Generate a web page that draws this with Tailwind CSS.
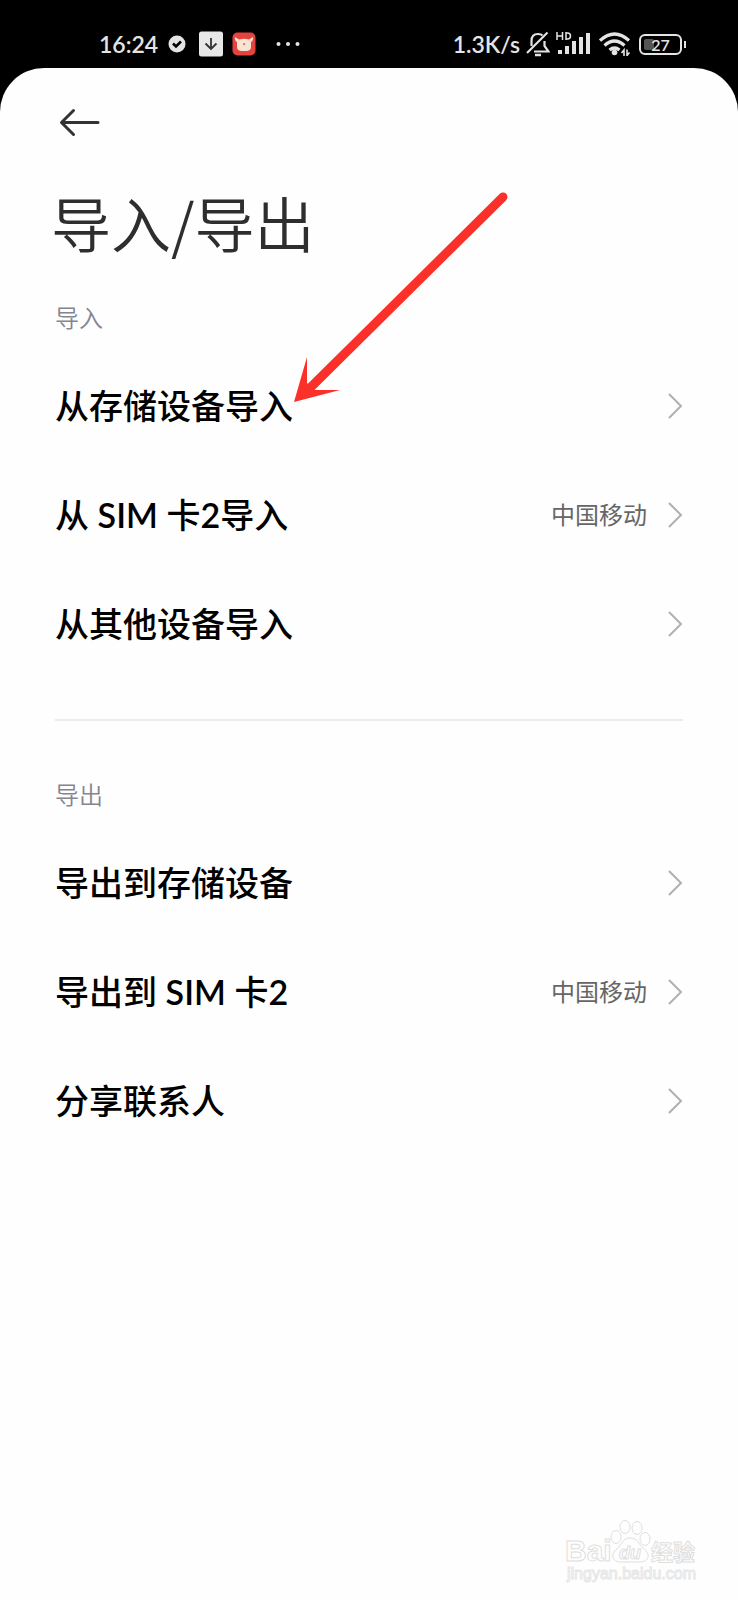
<!DOCTYPE html>
<html lang="zh-CN">
<head>
  <meta charset="UTF-8" />
  <meta name="viewport" content="width=device-width, initial-scale=1" />
  <title>导入/导出</title>
  <script src="https://cdn.jsdelivr.net/npm/@tailwindcss/browser@4"></script>
</head>
<body class="bg-black font-[Lato,'Noto_Sans_CJK_SC',sans-serif]">
  <div class="min-h-screen flex flex-col">

    <!-- status bar -->
    <header class="h-[68px] pt-5 pl-[99px] pr-[52px] flex justify-between text-[23px] leading-[48px] text-[#e4e4e4]">
      <div class="flex items-center h-12">
        <span class="font-semibold">16:24</span>
        <svg class="ml-2.5 size-[18px]" viewBox="0 0 18 18">
          <circle cx="9" cy="9" r="8.5" fill="#e4e4e4" />
          <path d="M5 8.500l3 3 5-5" fill="none" stroke="#000" stroke-width="2.5" />
        </svg>
        <svg class="ml-3 size-[26px]" viewBox="0 0 26 26">
          <rect x="1" y="0.5" width="24" height="25" rx="2.5" fill="#e8e8e8" />
          <path d="M13 7v11M7.500 12.500L13 18l5.500-5.500" fill="none" stroke="#333" stroke-width="1.8" />
        </svg>
        <svg class="ml-2 size-6" viewBox="0 0 24 24">
          <rect x="0.5" y="0.5" width="23" height="23" rx="5" fill="#e5433d" />
          <path d="M3 5l4 2.500q5-1.500 10 0L21 5q.5 3.500-2 5v5q0 3.500-4 4H9q-4-.5-4-4v-5Q2.500 8.500 3 5z" fill="#fbe3d4" />
          <path d="M11 11.500h2.500L12 13.500z" fill="#8a4a3c" />
        </svg>
        <svg class="ml-5 w-6 h-6" viewBox="0 0 24 24" fill="#e4e4e4">
          <circle cx="2.5" cy="12" r="2" /><circle cx="12" cy="12" r="2" /><circle cx="21.5" cy="12" r="2" />
        </svg>
      </div>
      <div class="flex items-center h-12">
        <span class="font-semibold">1.3K/s</span>
        <svg class="ml-1.5 w-6 h-[26px]" viewBox="0 0 24 26" fill="none" stroke="#e4e4e4" stroke-width="2.2">
          <path d="M5.500 15v-5q0-7 6.500-7 3 0 4.500 1.500M18.500 10v5l4 5.500H8" />
          <path d="M1 22L21.500 1.500" />
          <path d="M9 24h6" stroke-width="2.5" />
        </svg>
        <!-- signal with HD mark -->
        <svg class="ml-1.5 w-[35px] h-6" viewBox="0 0 35 24" fill="#e4e4e4">
          <path d="M1 0v8M6.500 0v8M1 4h5.500M10 0v8M10 1h1.500q3 0 3 3t-3 3H10" fill="none" stroke="#e4e4e4" stroke-width="1.5" />
          <rect x="2" y="18" width="4" height="4" /><rect x="9" y="14" width="4" height="8" />
          <rect x="16" y="9" width="4" height="13" /><rect x="23" y="5" width="4" height="17" />
          <rect x="30" y="1" width="4" height="21" />
        </svg>
        <svg class="ml-2 w-8 h-6" viewBox="0 0 32 24" fill="none" stroke="#e4e4e4" stroke-width="3.2">
          <path d="M1 8.500q14.500-13 29 0M5.500 13.500q10-9 20 0M10.500 18q5-4 10 0" />
          <circle cx="15.5" cy="20.5" r="2.8" fill="#e4e4e4" stroke="none" />
          <path d="M25 24v-6l-2.500 3M28 17.500v6l2.500-3" stroke-width="1.6" />
        </svg>
        <div class="ml-2 flex items-center gap-0.5">
          <div class="relative w-[43px] h-[21px] rounded-md border-2 border-[#e4e4e4] text-center text-[16px] leading-[17px] font-semibold">
            <div class="absolute left-[3px] top-[3px] bottom-[3px] w-2.5 rounded-xs bg-[#555]"></div>
            <span class="relative">27</span>
          </div>
          <div class="w-0.5 h-[7px] bg-[#e4e4e4]"></div>
        </div>
      </div>
    </header>

    <main class="relative flex-1 bg-[#fefefe] rounded-t-[44px] pt-[34px] px-[55px]">
      <button class="block ml-1 h-10 w-11" aria-label="返回">
        <svg class="w-11 h-10" viewBox="0 0 44 40" fill="none" stroke="#333" stroke-width="3" stroke-linecap="round" stroke-linejoin="round">
          <path d="M39 20.500H2.500M14.500 8.500l-12 12 12 12" />
        </svg>
      </button>
      <h1 class="mt-10 -ml-1 text-[60px] leading-[80px] font-[350] text-[#2e2e2e] font-['Noto_Sans_CJK_SC',sans-serif]">导入/导出</h1>

      <section class="mt-[38px]">
        <h2 class="mb-[15px] text-[24px] leading-9 font-[350] text-[#85858f]">导入</h2>
        <a href="#" class="h-[109px] flex items-center text-[34px] font-medium text-black">
          <span class="flex-1">从存储设备导入</span>
          <svg class="w-4 h-7" viewBox="0 0 16 28" fill="none" stroke="#b0b0b0" stroke-width="2"><path d="M2 2l12 12L2 26" /></svg>
        </a>
        <a href="#" class="h-[109px] flex items-center text-[34px] font-medium text-black">
          <span class="flex-1">从 <span class="font-semibold">SIM</span> 卡<span class="font-semibold">2</span>导入</span>
          <span class="mr-5 text-[24px] font-normal text-[#666]">中国移动</span>
          <svg class="w-4 h-7" viewBox="0 0 16 28" fill="none" stroke="#b0b0b0" stroke-width="2"><path d="M2 2l12 12L2 26" /></svg>
        </a>
        <a href="#" class="h-[109px] flex items-center text-[34px] font-medium text-black">
          <span class="flex-1">从其他设备导入</span>
          <svg class="w-4 h-7" viewBox="0 0 16 28" fill="none" stroke="#b0b0b0" stroke-width="2"><path d="M2 2l12 12L2 26" /></svg>
        </a>
      </section>

      <hr class="mt-[41px] border-t-2 border-[#ebebeb]" />

      <section class="mt-14">
        <h2 class="mb-[15px] text-[24px] leading-9 font-[350] text-[#85858f]">导出</h2>
        <a href="#" class="h-[109px] flex items-center text-[34px] font-medium text-black">
          <span class="flex-1">导出到存储设备</span>
          <svg class="w-4 h-7" viewBox="0 0 16 28" fill="none" stroke="#b0b0b0" stroke-width="2"><path d="M2 2l12 12L2 26" /></svg>
        </a>
        <a href="#" class="h-[109px] flex items-center text-[34px] font-medium text-black">
          <span class="flex-1">导出到 <span class="font-semibold">SIM</span> 卡<span class="font-semibold">2</span></span>
          <span class="mr-5 text-[24px] font-normal text-[#666]">中国移动</span>
          <svg class="w-4 h-7" viewBox="0 0 16 28" fill="none" stroke="#b0b0b0" stroke-width="2"><path d="M2 2l12 12L2 26" /></svg>
        </a>
        <a href="#" class="h-[109px] flex items-center text-[34px] font-medium text-black">
          <span class="flex-1">分享联系人</span>
          <svg class="w-4 h-7" viewBox="0 0 16 28" fill="none" stroke="#b0b0b0" stroke-width="2"><path d="M2 2l12 12L2 26" /></svg>
        </a>
      </section>

      <!-- pointer to the first row -->
      <svg class="absolute left-[290px] top-[120px] w-[224px] h-[220px] pointer-events-none" viewBox="0 0 224 220">
        <path d="M213 9L21 199" stroke="#fb3028" stroke-width="9" stroke-linecap="round" />
        <path d="M4 214L17 169V195L25 202L50 202z" fill="#fb3028" />
      </svg>

      <!-- watermark -->
      <svg class="absolute right-[36px] bottom-[8px] w-[138px] h-[76px]" viewBox="0 0 138 76" fill="#fefefe" stroke="#dedede" stroke-width="1">
        <text x="1" y="45" font-family="Liberation Sans" font-weight="700" font-size="30">Bai</text>
        <path d="M66 22c8 0 9 7 14 11 7 5 5 13-4 13H57c-9 0-11-8-4-13 5-4 5-11 13-11z" />
        <ellipse cx="52" cy="21" rx="5" ry="6.5" /><ellipse cx="61" cy="11" rx="5" ry="6.5" />
        <ellipse cx="73" cy="12" rx="5" ry="6.5" /><ellipse cx="81" cy="23" rx="5" ry="6.5" />
        <text x="55" y="43" font-family="Liberation Sans" font-weight="700" font-style="italic" font-size="18">du</text>
        <text x="87" y="44" font-family="Noto Sans CJK SC" font-weight="700" font-size="22">经验</text>
        <text x="3" y="63" font-family="Liberation Sans" font-size="16" stroke="#e6e6e6">jingyan.baidu.com</text>
      </svg>
    </main>
  </div>
</body>
</html>
